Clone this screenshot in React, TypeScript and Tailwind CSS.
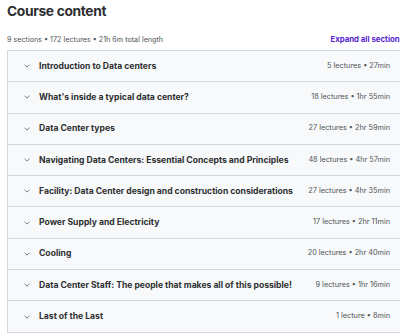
import React from "react";

const sections = [
  ["Introduction to Data centers", "5 lectures • 27min"],
  ["What's inside a typical data center?", "18 lectures • 1hr 55min"],
  ["Data Center types", "27 lectures • 2hr 59min"],
  ["Navigating Data Centers: Essential Concepts and Principles", "48 lectures • 4hr 57min"],
  ["Facility: Data Center design and construction considerations", "27 lectures • 4hr 35min"],
  ["Power Supply and Electricity", "17 lectures • 2hr 11min"],
  ["Cooling", "20 lectures • 2hr 40min"],
  ["Data Center Staff: The people that makes all of this possible!", "9 lectures • 1hr 16min"],
  ["Last of the Last", "1 lecture • 8min"],
];

function Chevron() {
  return (
    <svg width="6" height="4" viewBox="0 0 6 4" className="shrink-0">
      <path d="M0.6 0.8 L3 3.1 L5.4 0.8" fill="none" stroke="#6a6f73" strokeWidth="0.9" />
    </svg>
  );
}

export default function App() {
  return (
    <div
      className="w-[400px] h-[333px] overflow-hidden bg-white text-[#2d2f31]"
      style={{ fontFamily: "Inter, 'Noto Sans', sans-serif" }}
    >
      <div className="pl-[7px] w-[420px]">
        <h2 className="text-[13.8px] font-bold leading-[20px] pt-[1px] tracking-[-0.35px]">Course content</h2>
        <div className="flex items-center justify-between mt-[12px] h-[14px] pr-[16px]">
          <span className="text-[7.2px] text-[#505457]">9 sections • 172 lectures • 21h 6m total length</span>
          <span className="text-[7.8px] font-bold text-[#5624d0]">Expand all sections</span>
        </div>
        <div className="mt-[3px] border-t border-l border-[#d1d7dc]">
          {sections.map(([t, m]) => (
            <div
              key={t}
              className="h-[31.3px] flex items-center bg-[#f7f9fa] border-b border-[#d1d7dc] pl-[16px] pr-[30px]"
            >
              <Chevron />
              <span className="ml-[9px] text-[8.6px] font-bold flex-1 whitespace-nowrap">{t}</span>
              <span className="text-[7.3px] text-[#505457] whitespace-nowrap">{m}</span>
            </div>
          ))}
        </div>
      </div>
    </div>
  );
}
